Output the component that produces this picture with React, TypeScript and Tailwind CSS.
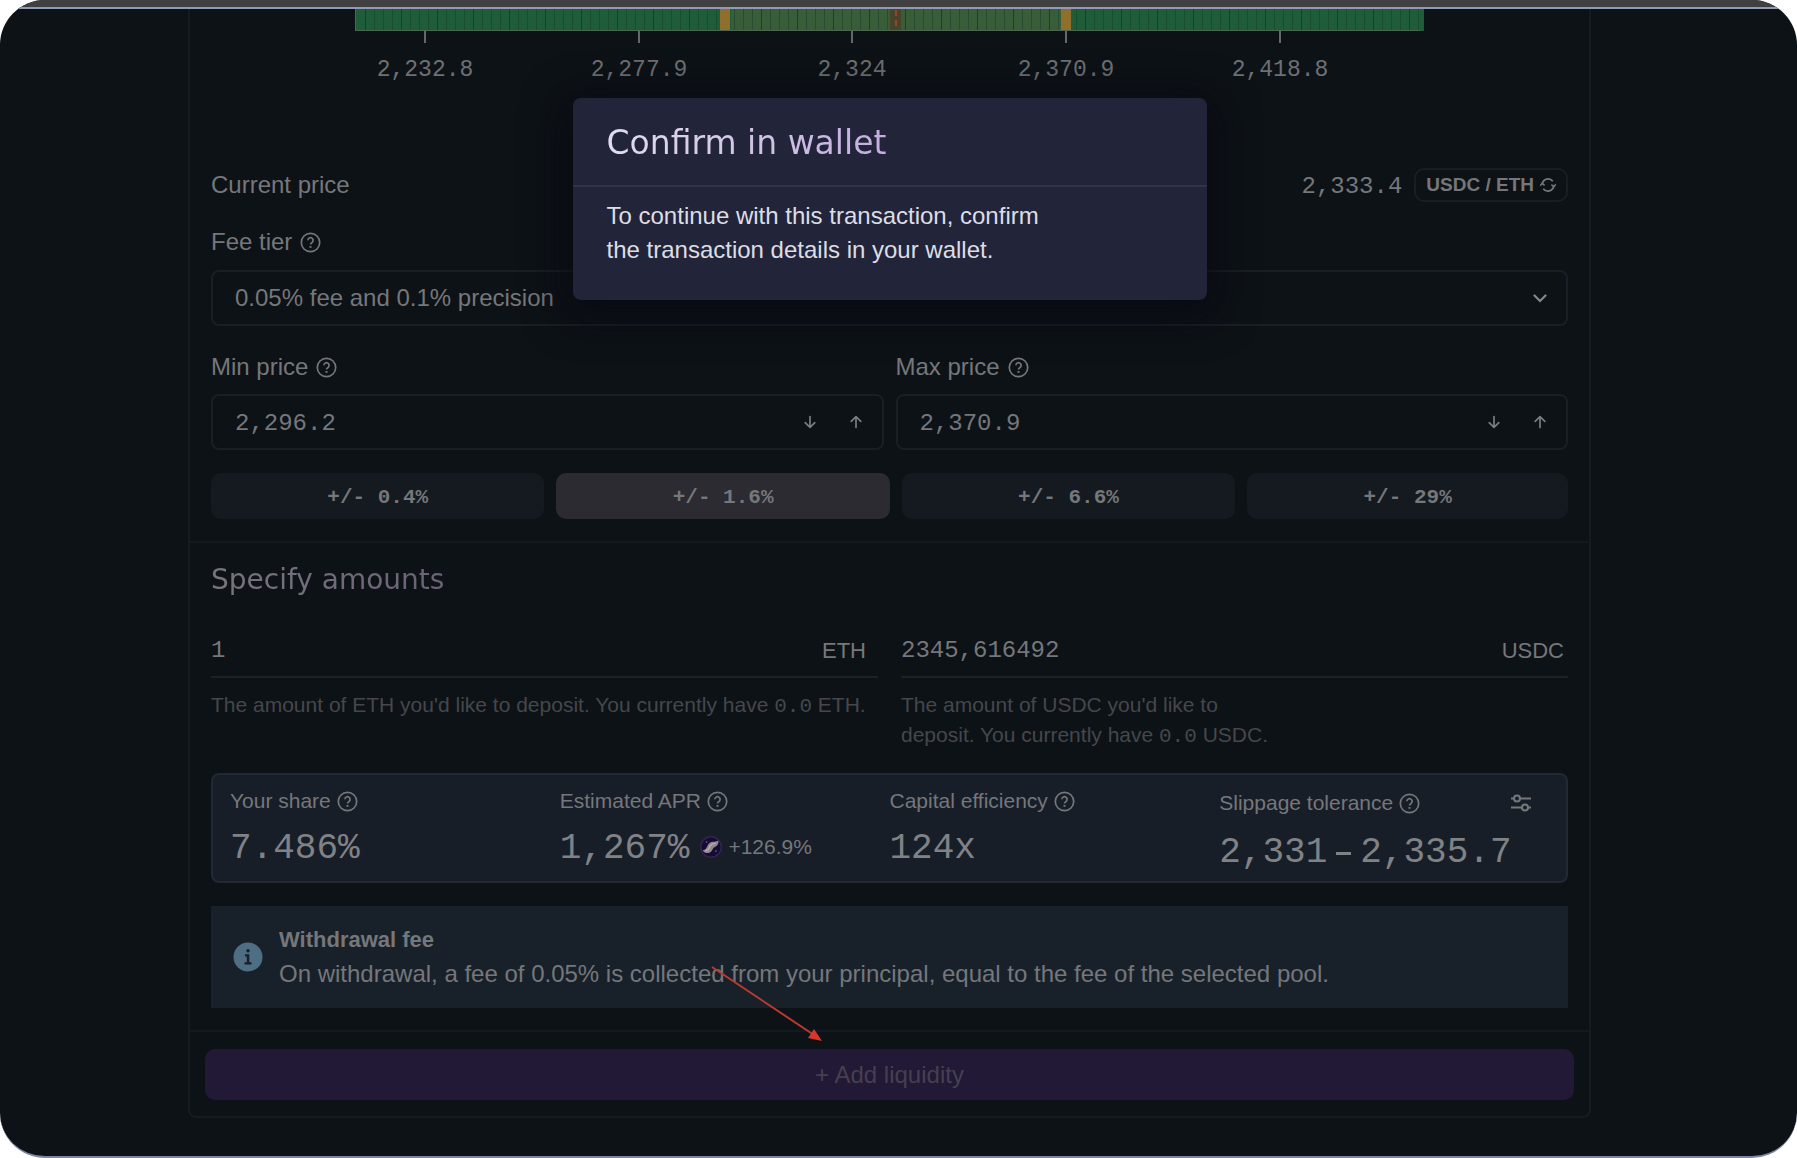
import { useState } from 'react';

const TICKS = [
  { x: 70, label: '2,232.8' },
  { x: 284, label: '2,277.9' },
  { x: 497, label: '2,324' },
  { x: 711, label: '2,370.9' },
  { x: 925, label: '2,418.8' },
];

const RANGES = ['0.4%', '1.6%', '6.6%', '29%'];

function HelpIcon() {
  return (
    <svg viewBox="0 0 21 21" className="w-[21px] h-[21px] shrink-0" fill="none" stroke="currentColor" strokeWidth="1.7">
      <circle cx="10.5" cy="10.5" r="9.2" />
      <path d="M7.9 8.3a2.6 2.6 0 1 1 4.3 2c-.9.7-1.7 1.1-1.7 2.3" />
      <path d="M10.5 14v1.8" strokeWidth="2" />
    </svg>
  );
}

function Arrow({ up }: { up?: boolean }) {
  return (
    <svg viewBox="0 0 14 14" className="w-[14px] h-[14px]" fill="none" stroke="currentColor" strokeWidth="1.7" strokeLinecap="round" strokeLinejoin="round">
      {up ? <path d="M7 12.5V1.8M2.2 6.4L7 1.6l4.8 4.8" /> : <path d="M7 1.5v10.7M2.2 7.6L7 12.4l4.8-4.8" />}
    </svg>
  );
}

function LiquidityChart() {
  const bars = Array.from({ length: 118 }, (_, i) => i);
  return (
    <div className="relative w-[1069px] h-[81px] mx-auto">
      <svg viewBox="0 0 1069 34" className="block w-[1069px] h-[34px]" shapeRendering="crispEdges">
        <rect x="0" y="0" width="1069" height="22" fill="#1f5c3a" />
        <rect x="376" y="0" width="330" height="22" fill="#385d38" />
        {bars.map((i) => (
          <rect key={i} x={10 + i * 9} y="0" width="1" height="21" fill="#143a27" opacity={i % 4 === 0 ? 0.8 : 0.45} />
        ))}
        <rect x="365" y="0" width="10" height="22" fill="#8f6f2b" />
        <rect x="706" y="0" width="10" height="22" fill="#8f6f2b" />
        <rect x="535" y="0" width="11" height="21" fill="#49432a" />
        <path d="M540.5 1v20" stroke="#8a4a2c" strokeWidth="2" strokeDasharray="6 4" />
        <rect x="0" y="0" width="1" height="22" fill="#4c6652" />
        <rect x="0" y="21" width="1065" height="1" fill="#4c6652" />
        {TICKS.map((t) => (
          <rect key={t.x} x={t.x - 1} y="22" width="2" height="12" fill="#66686c" />
        ))}
      </svg>
      {TICKS.map((t) => (
        <span key={t.x} className="absolute top-[46px] -translate-x-1/2 font-['Liberation_Mono',monospace] text-[23px] leading-[30px] text-[#6e7074]" style={{ left: t.x }}>
          {t.label}
        </span>
      ))}
    </div>
  );
}

function PriceInput({ id, label, initial }: { id: string; label: string; initial: string }) {
  const [value, setValue] = useState(initial);
  return (
    <div>
      <div className="flex items-center gap-2 h-[34px]">
        <label htmlFor={id}>{label}</label>
        <HelpIcon />
      </div>
      <div className="mt-[10px] flex items-center h-[56px] rounded-lg border-2 border-[#1a1e26] pl-[22px] pr-[19px]">
        <input
          id={id}
          value={value}
          onChange={(e) => setValue(e.target.value)}
          className="flex-1 min-w-0 pt-1 bg-transparent outline-none font-['Liberation_Mono',monospace]"
        />
        <div className="flex gap-8">
          <button aria-label="Decrease" className="text-[#7b7d81]"><Arrow /></button>
          <button aria-label="Increase" className="text-[#7b7d81]"><Arrow up /></button>
        </div>
      </div>
    </div>
  );
}

function AmountInput({ id, token, initial, pad }: { id: string; token: string; initial: string; pad: string }) {
  const [value, setValue] = useState(initial);
  return (
    <div>
      <div className={`flex items-center h-[56px] border-b-2 border-[#1c2126] ${pad}`}>
        <input
          id={id}
          value={value}
          onChange={(e) => setValue(e.target.value)}
          className="flex-1 min-w-0 pt-1 bg-transparent outline-none font-['Liberation_Mono',monospace]"
        />
        <label htmlFor={id} className="pt-1 text-[22px]">{token}</label>
      </div>
      <p className="mt-[12px] max-w-[660px] text-[21px] leading-[30px] text-[#45474d]">
        The amount of {token} you'd like to {token === 'USDC' && <br />}
        deposit. You currently have <span className="font-['Liberation_Mono',monospace]">0.0</span> {token}.
      </p>
    </div>
  );
}

function StatLabel({ children }: { children: string }) {
  return (
    <div className="flex items-center gap-[6px] text-[21px] leading-[30px]">
      <span>{children}</span>
      <HelpIcon />
    </div>
  );
}

function TokenIcon() {
  return (
    <svg viewBox="0 0 22 22" className="w-[22px] h-[22px] shrink-0">
      <circle cx="11" cy="11" r="10.3" fill="#140d33" stroke="#35244f" strokeWidth="1.4" />
      <path d="M2.5 14.2c3.5-.2 3.8-2.2 5.2-4.9 1.2-2.4 3-3.4 5.3-3.5 2 0 3.6-.3 5.4-1.3.4 3.3-.9 5.3-3.5 6.6-2 1-2.1 2.4-3.5 4.2-2 2.6-6.7 2.4-8.9-1.1z" fill="#93858f" />
      <path d="M6 14.8c3-.7 2.8-3.2 4.6-5.4 1.2-1.4 2.8-1.8 4.6-2" stroke="#b9aeb3" strokeWidth="1.4" fill="none" strokeLinecap="round" />
      <circle cx="6.5" cy="6" r=".9" fill="#5a4b8c" />
      <circle cx="16" cy="15" r=".9" fill="#5a4b8c" />
    </svg>
  );
}

export default function App() {
  const [range, setRange] = useState('1.6%');

  return (
    <div className="bg-white font-['Liberation_Sans',Arial,sans-serif] text-[24px] leading-[34px] text-[#75777b]">
      <div className="relative flex flex-col min-h-screen overflow-hidden rounded-[45px] bg-[#0d1216] border-b-2 border-[#7d86a0]">
        <div className="h-[9px] bg-[#404042] border-b-2 border-[#8e9bb5]" />

        <div className="flex-1 pr-[18px] pb-[37px]">
          <main className="relative max-w-[1403px] mx-auto rounded-b-lg border-2 border-t-0 border-[#161a22]">
            <section className="px-[21px] pb-[22px]">
              <LiquidityChart />

              <div className="mt-[78px] flex items-center justify-between">
                <span>Current price</span>
                <div className="flex items-center gap-3">
                  <span className="pt-1 font-['Liberation_Mono',monospace] leading-[30px]">2,333.4</span>
                  <button className="flex items-center gap-[6px] h-[34px] px-[10px] rounded-[10px] border-2 border-[#1a1e24] text-[19px] font-bold">
                    USDC / ETH
                    <svg viewBox="0 0 16 16" className="w-[16px] h-[16px]" fill="none" stroke="currentColor" strokeWidth="1.8">
                      <path d="M2.2 6.8a6 6 0 0 1 10.6-2.6M13.8 9.2a6 6 0 0 1-10.6 2.6" />
                      <path d="M0 8.8l2.2-2.4 2.4 2M11.4 7.6l2.4 2L16 7.2" strokeWidth="1.5" />
                    </svg>
                  </button>
                </div>
              </div>

              <div className="mt-[23px] flex items-center gap-2">
                <label htmlFor="fee">Fee tier</label>
                <HelpIcon />
              </div>
              <div className="relative mt-[11px]">
                <select id="fee" className="block w-full h-[56px] appearance-none rounded-lg border-2 border-[#1a1e26] bg-transparent pl-[22px] outline-none">
                  <option>0.05% fee and 0.1% precision</option>
                </select>
                <svg viewBox="0 0 14 9" className="absolute right-[21px] top-[24px] w-[14px] h-[9px] pointer-events-none" fill="none" stroke="#85878b" strokeWidth="2.2" strokeLinecap="round">
                  <path d="M1.5 1.5L7 7l5.5-5.5" />
                </svg>
              </div>

              <div className="mt-[24px] grid grid-cols-2 gap-3">
                <PriceInput id="min" label="Min price" initial="2,296.2" />
                <PriceInput id="max" label="Max price" initial="2,370.9" />
              </div>

              <div className="mt-[23px] flex gap-3 font-['Liberation_Mono',monospace] text-[21px] font-bold">
                {RANGES.map((r) => (
                  <button
                    key={r}
                    onClick={() => setRange(r)}
                    className={`grow h-[46px] pt-1 rounded-[10px] ${r === range ? 'bg-[#2b2b31]' : 'bg-[#151a20]'}`}
                  >
                    +/- {r}
                  </button>
                ))}
              </div>
            </section>

            <section className="border-t-2 border-[#141921] px-[21px] pt-[18px] pb-[22px]">
              <h2 className="w-fit font-['DejaVu_Sans',sans-serif] text-[28px] leading-[38px] bg-linear-to-r from-[#77757e] to-[#6a6276] bg-clip-text text-transparent">
                Specify amounts
              </h2>
              <div className="mt-[23px] grid grid-cols-2 gap-[23px]">
                <AmountInput id="eth" token="ETH" initial="1" pad="pr-3" />
                <AmountInput id="usdc" token="USDC" initial="2345,616492" pad="pr-1" />
              </div>

              <div className="mt-[21px] grid grid-cols-4 h-[110px] rounded-lg border-2 border-[#232934] bg-[#181e28] px-[17px] pt-[11px]">
                <div>
                  <StatLabel>Your share</StatLabel>
                  <div className="mt-3 font-['Liberation_Mono',monospace] text-[36px] leading-[42px] text-[#808286]">7.486%</div>
                </div>
                <div>
                  <StatLabel>Estimated APR</StatLabel>
                  <div className="mt-3 flex items-center">
                    <span className="font-['Liberation_Mono',monospace] text-[36px] leading-[42px] text-[#808286]">1,267%</span>
                    <span className="ml-[11px] flex items-center gap-[6px] pb-1 text-[21px]">
                      <TokenIcon />
                      +126.9%
                    </span>
                  </div>
                </div>
                <div>
                  <StatLabel>Capital efficiency</StatLabel>
                  <div className="mt-3 font-['Liberation_Mono',monospace] text-[36px] leading-[42px] text-[#808286]">124x</div>
                </div>
                <div>
                  <div className="flex items-center justify-between h-[34px] pr-[17px]">
                    <StatLabel>Slippage tolerance</StatLabel>
                    <button aria-label="Slippage settings">
                      <svg viewBox="0 0 22 18" className="w-[22px] h-[18px]" fill="none" stroke="currentColor" strokeWidth="2">
                        <path d="M1 4.5h3M10 4.5h11M1 13.5h11M18 13.5h3" />
                        <circle cx="7" cy="4.5" r="3" />
                        <circle cx="15" cy="13.5" r="3" />
                      </svg>
                    </button>
                  </div>
                  <div className="mt-3 flex items-center gap-[9px] font-['Liberation_Mono',monospace] text-[36px] leading-[42px] text-[#808286]">
                    <span>2,331</span>
                    <span className="w-[15px] h-[3px] bg-current" />
                    <span>2,335.7</span>
                  </div>
                </div>
              </div>

              <div className="mt-[23px] flex items-center h-[102px] bg-[#18212a] pl-[22px]">
                <svg viewBox="0 0 30 30" className="w-[30px] h-[30px] shrink-0">
                  <circle cx="15" cy="15" r="14.5" fill="#4d6e83" />
                  <circle cx="15" cy="8.8" r="1.8" fill="#18212a" />
                  <path d="M12 12.3h4.3v8h2.2v2.2h-7v-2.2h2.3v-5.8H12z" fill="#18212a" />
                </svg>
                <div className="ml-4">
                  <h3 className="text-[22px] leading-[34px] font-bold">Withdrawal fee</h3>
                  <p>On withdrawal, a fee of 0.05% is collected from your principal, equal to the fee of the selected pool.</p>
                </div>
              </div>
            </section>

            <footer className="border-t-2 border-[#141921] px-[15px] pt-[17px] pb-4">
              <button className="block w-full h-[51px] rounded-[10px] bg-[#211936] text-[#454050]">+ Add liquidity</button>
            </footer>

            <div role="dialog" aria-labelledby="dialog-title" className="absolute top-[89px] left-1/2 -translate-x-1/2 w-[634px] h-[202px] rounded-lg bg-[#22253a] shadow-[0_8px_40px_8px_rgba(8,8,18,0.8)]">
              <div className="h-[89px] border-b-2 border-[#303349] px-[34px] pt-[23px]">
                <h1 id="dialog-title" className="w-fit font-['DejaVu_Sans',sans-serif] text-[33px] leading-[44px] bg-linear-to-r from-[#e2dcf0] to-[#c3aede] bg-clip-text text-transparent">
                  Confirm in wallet
                </h1>
              </div>
              <p className="px-[34px] pt-[12px] max-w-[530px] text-[#dddde4]">
                To continue with this transaction, confirm the transaction details in your wallet.
              </p>
            </div>

            {/* pointer to the submit button */}
            <svg viewBox="0 0 112 76" className="absolute top-[956px] left-[520px] w-[112px] h-[76px] pointer-events-none">
              <path d="M2 2L104 70" stroke="#b83a30" strokeWidth="2" />
              <path d="M112 76L98 73l6-9z" fill="#d8362a" />
            </svg>
          </main>
        </div>
      </div>
    </div>
  );
}
